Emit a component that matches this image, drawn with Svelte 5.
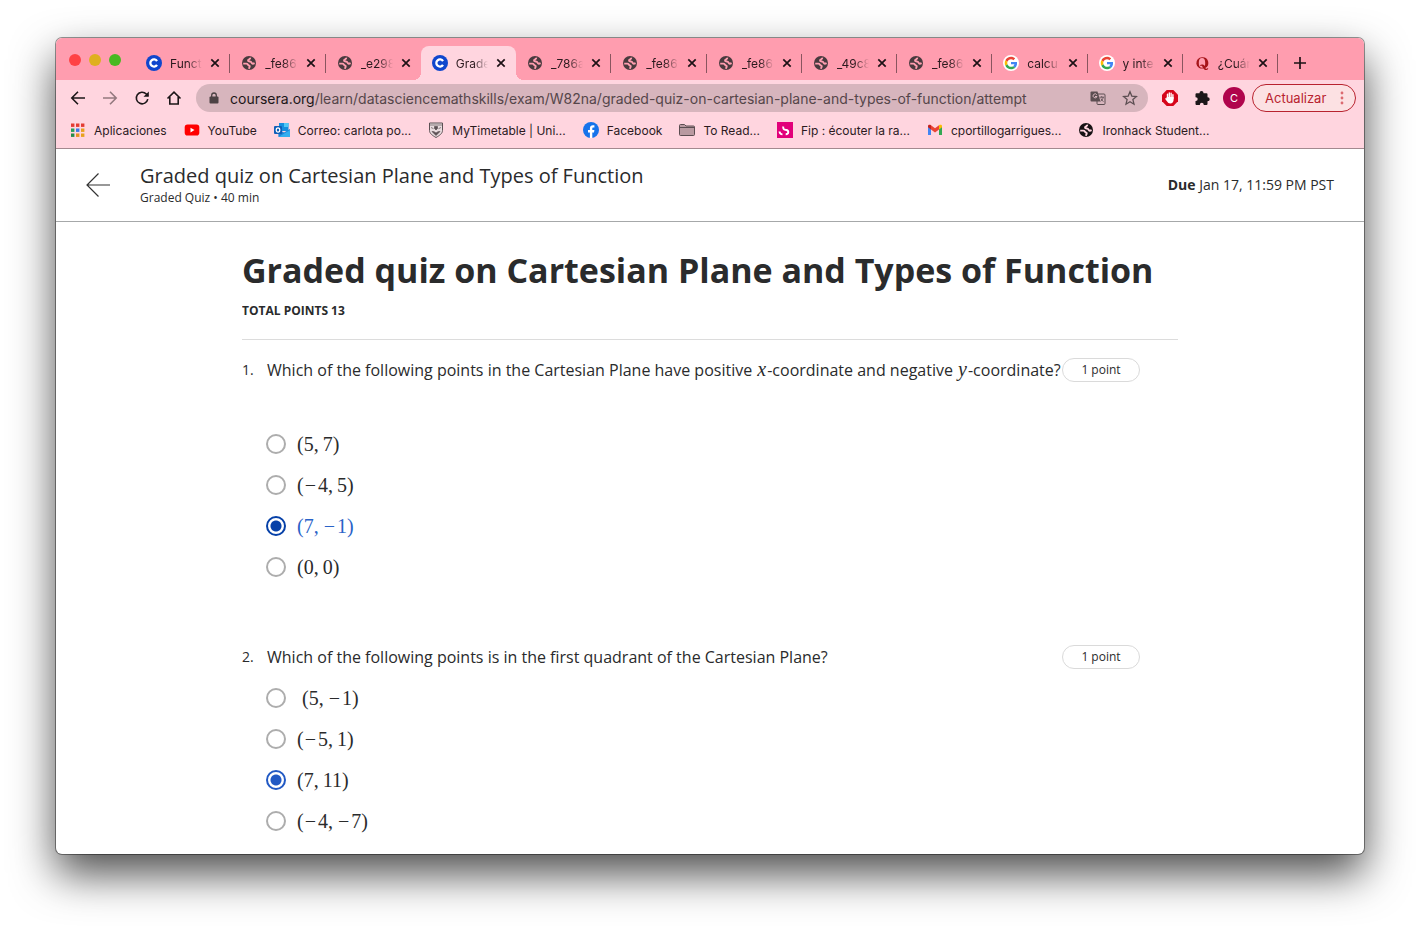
<script>
  const tabs = [
    { icon: 'coursera', title: 'Funct' },
    { icon: 'globe', title: '_fe86' },
    { icon: 'globe', title: '_e298' },
    { icon: 'coursera', title: 'Grade', active: true },
    { icon: 'globe', title: '_786a' },
    { icon: 'globe', title: '_fe86' },
    { icon: 'globe', title: '_fe86' },
    { icon: 'globe', title: '_49c8' },
    { icon: 'globe', title: '_fe86' },
    { icon: 'google', title: 'calcu' },
    { icon: 'google', title: 'y inte' },
    { icon: 'quora', title: '¿Cuán' }
  ];

  const bookmarks = [
    { icon: 'apps', title: 'Aplicaciones' },
    { icon: 'youtube', title: 'YouTube' },
    { icon: 'outlook', title: 'Correo: carlota po...' },
    { icon: 'shield', title: 'MyTimetable | Uni...' },
    { icon: 'facebook', title: 'Facebook' },
    { icon: 'folder', title: 'To Read...' },
    { icon: 'fip', title: 'Fip : écouter la ra...' },
    { icon: 'gmail', title: 'cportillogarrigues...' },
    { icon: 'globe', title: 'Ironhack Student...', dark: true }
  ];

  let questions = $state([
    {
      text: ['Which of the following points in the Cartesian Plane have positive ', 'x', '-coordinate and negative ', 'y', '-coordinate?'],
      options: ['(5,7)', '(−4,5)', '(7,−1)', '(0,0)'],
      answer: 2,
      spaced: true,
      focused: true
    },
    {
      text: ['Which of the following points is in the first quadrant of the Cartesian Plane?'],
      options: ['\u00a0(5,−1)', '(−5,1)', '(7,11)', '(−4,−7)'],
      answer: 2
    }
  ]);
</script>

{#snippet icon(name)}
  <svg class="icon" viewBox="0 0 16 16" aria-hidden="true">
    {#if name === 'coursera'}
      <circle cx="8" cy="8" r="8" fill="#0f46cd" />
      <path d="M11 6.1A3.6 3.6 0 1 0 11 9.9" fill="none" stroke="#fff" stroke-width="2.3" />
    {:else if name === 'globe'}
      <circle cx="8" cy="8" r="7" fill="currentColor" />
      <path d="M9.300 2.700C9.500 4.600 7.200 3.900 7 5.400c-.1 1.400 1.300 1 2.400 1.300 1.400.4 1 1.900 2.300 2 .8.1 1.400-.3 1.900-.6" fill="none" stroke="var(--land)" stroke-width="1.900" />
      <path d="M2.200 8.600h3.200c1.500 0 1.300 1.700 2.500 1.900 1.400.3.900 1.600-.2 3.300" fill="none" stroke="var(--land)" stroke-width="1.900" />
    {:else if name === 'google'}
      <circle cx="8" cy="8" r="8" fill="#fff" />
      <g transform="translate(1.700 1.700) scale(.2625)">
        <path fill="#EA4335" d="M24 9.500c3.540 0 6.710 1.220 9.210 3.600l6.850-6.850C35.900 2.380 30.470 0 24 0 14.620 0 6.510 5.380 2.560 13.220l7.980 6.190C12.430 13.720 17.740 9.500 24 9.500z" />
        <path fill="#4285F4" d="M46.980 24.550c0-1.570-.15-3.090-.38-4.550H24v9.020h12.940c-.58 2.960-2.260 5.480-4.780 7.180l7.730 6c4.510-4.180 7.090-10.360 7.090-17.650z" />
        <path fill="#FBBC05" d="M10.530 28.590c-.48-1.450-.76-2.990-.76-4.590s.27-3.140.76-4.590l-7.980-6.190C.92 16.460 0 20.120 0 24s.92 7.540 2.560 10.780l7.970-6.190z" />
        <path fill="#34A853" d="M24 48c6.480 0 11.930-2.130 15.890-5.810l-7.730-6c-2.150 1.450-4.920 2.300-8.160 2.300-6.260 0-11.570-4.220-13.470-9.910l-7.980 6.190C6.510 42.620 14.620 48 24 48z" />
      </g>
    {:else if name === 'quora'}
      <path fill="#a6151a" fill-rule="evenodd" d="M8 2.200a5.700 5.700 0 1 0 1.500 11.200c.7 1 1.500 1.500 2.700 1.500 1.500 0 2-.900 2-2h-.700c0 .5-.3.9-.9.9-.5 0-.9-.3-1.300-.900A5.700 5.700 0 0 0 8 2.200zm0 .8c2.300 0 3.200 1.700 3.200 4.900 0 1.300-.1 2.300-.5 3.100-.700-.9-1.600-1.400-2.700-1.400-.9 0-1.600.3-2 .7l.3.6c1.200-.4 2 .3 2.600 1.600-.3.100-.6.200-.9.200-2.300 0-3.200-1.700-3.200-4.800S5.700 3 8 3z" />
    {:else if name === 'apps'}
      {#each [0, 1, 2] as row}
        {#each [0, 1, 2] as col}
          <rect x={1 + col * 5} y={1.500 + row * 5} width="3.400" height="3.400" fill={['#e33b32', '#e33b32', '#e33b32', '#25a05a', '#3b78e7', '#e8a11d', '#258c4b', '#e8911d', '#e8a11d'][row * 3 + col]} />
        {/each}
      {/each}
    {:else if name === 'youtube'}
      <rect x=".7" y="2.600" width="14.600" height="11" rx="2.800" fill="#f00" />
      <path d="M6.500 5.800v4.600l4-2.300z" fill="#fff" />
    {:else if name === 'outlook'}
      <path d="M5 1h9.500v8H5z" fill="#1490df" />
      <path d="M10 1h4.500v4H10z" fill="#50c8f5" />
      <path d="M4 7l6 3.500L16 7v8H4.500z" fill="#1b84d8" />
      <path d="M4.500 15L16 8v7z" fill="#32aef0" />
      <rect x="0" y="4" width="8" height="8" rx="1" fill="#0f5fb8" />
      <ellipse cx="4" cy="8" rx="1.800" ry="2.100" fill="none" stroke="#fff" stroke-width="1.200" />
    {:else if name === 'shield'}
      <path d="M1.500 1h13v7.500c0 3-3 5-6.500 7-3.500-2-6.500-4-6.500-7z" fill="#e9dcdf" stroke="#5b5054" stroke-width="1" />
      <path d="M2 3h12M3 5.500l2.500 1.200M13 5.500l-2.500 1.200M6.500 4.500h3v2L8 8 6.500 6.500zM4 9.500l4 4 4-4-2 .2-2 1.300-2-1.300z" fill="#5b5054" stroke="#5b5054" stroke-width=".7" />
    {:else if name === 'facebook'}
      <circle cx="8" cy="8" r="8" fill="#1673ea" />
      <path d="M6.900 16v-5.500H5V8.100h1.900V6.400c0-2.100 1.200-3.200 3-3.200l1.500.1v2.100h-.9c-1 0-1.200.5-1.200 1.200v1.500h2.100l-.4 2.400H9.300V16z" fill="#fff" />
    {:else if name === 'folder'}
      <path d="M.5 3.500q0-1 1-1h4l1.500 1.500h7.500q1 0 1 1v7.500q0 1-1 1h-13q-1 0-1-1z" fill="#b99aa1" stroke="#5b4d51" />
      <path d="M.5 5.500h15" stroke="#5b4d51" />
    {:else if name === 'fip'}
      <rect width="16" height="16" fill="#e2007a" />
      <path d="M6.300 4.500c-.4 1.800.3 2.900 2 3.200 1.900.2 3 .8 3 2.300 0 1.400-1 2.200-2.600 2.200M2.500 9.500c.2 1.900 1.300 2.900 3 2.900" fill="none" stroke="#fff" stroke-width="1.900" />
    {:else if name === 'gmail'}
      <path d="M1 4v9h3V6.500z" fill="#4285f4" />
      <path d="M12 6.500V13h3V4z" fill="#34a853" />
      <path d="M4 3.200v4.300l4 3 4-3V3.200l-4 3z" fill="#ea4335" />
      <path d="M1 4v1.300l3 2.200V3.200C2.800 2.300 1 2.700 1 4z" fill="#c5221f" />
      <path d="M15 4v1.300l-3 2.200V3.200c1.200-.9 3-.5 3 .8z" fill="#fbbc04" />
    {/if}
  </svg>
{/snippet}

{#snippet point(text)}
  <span class="math">{#each text as ch}{#if ch === ','}<span class="comma">,</span>{:else if ch === '−'}<span class="minus">−</span>{:else}{ch}{/if}{/each}</span>
{/snippet}

<div class="desktop">
  <div class="window">
    <div class="tabstrip">
      <div class="lights"><i class="red"></i><i class="yellow"></i><i class="green"></i></div>
      <div class="tabs">
        {#each tabs as tab, i}
          <div class="tab" class:active={tab.active} class:divided={!tab.active && !tabs[i + 1]?.active}>
            {@render icon(tab.icon)}
            <span class="tab-title">{tab.title}</span>
            <button class="close" aria-label="Close tab">
              <svg viewBox="0 0 10 10"><path d="M1.300 1.300l7.400 7.400M8.700 1.300L1.300 8.700" /></svg>
            </button>
          </div>
        {/each}
      </div>
      <button class="new-tab" aria-label="New tab">
        <svg viewBox="0 0 12 12"><path d="M6 0v12M0 6h12" /></svg>
      </button>
    </div>

    <div class="toolbar">
      <button class="tool" aria-label="Back"><svg viewBox="0 0 16 16"><path d="M15 8H2M8 1.800L1.800 8 8 14.200" /></svg></button>
      <button class="tool dim" aria-label="Forward"><svg viewBox="0 0 16 16"><path d="M1 8h13M8 1.800L14.200 8 8 14.200" /></svg></button>
      <button class="tool" aria-label="Reload"><svg viewBox="0 0 16 16"><path d="M13.800 9.200A5.800 5.800 0 1 1 12.300 4L14 5.700" /><path d="M14.800 1.500v5.300H9.500z" fill="currentColor" stroke="none" /></svg></button>
      <button class="tool" aria-label="Home"><svg viewBox="0 0 16 16"><path d="M1.500 8.500L8 2.200l6.500 6.300M3.800 7v7h8.400V7" /></svg></button>
      <div class="address">
        <svg class="lock" viewBox="0 0 10 12" aria-hidden="true"><rect x=".5" y="4.500" width="9" height="7" rx="1" fill="#4d4245" /><path d="M2.700 5V3.300a2.300 2.300 0 0 1 4.600 0V5" fill="none" stroke="#4d4245" stroke-width="1.300" /></svg>
        <span class="url"><b>coursera.org</b>/learn/datasciencemathskills/exam/W82na/graded-quiz-on-cartesian-plane-and-types-of-function/attempt</span>
        <button class="tool soft" aria-label="Translate">
          <svg viewBox="0 0 16 16"><rect x="7" y="4" width="8" height="10.500" rx="1" stroke-width="1" /><path d="M1.500 1.500h6l3 10h-9q-1 0-1-1v-8q0-1 1-1z" fill="currentColor" stroke="none" /><path d="M6.800 4.800A2 2 0 1 0 7 6.500H5" stroke="#d7b5bd" stroke-width="1" /><path d="M9.500 7.200h4.500M11.700 6.200v1M13.200 7.200c-.3 2-1.500 3.300-2.500 4M11 8.500c.5 1.500 1.500 2.500 2.500 3" stroke-width=".9" /></svg>
        </button>
        <button class="tool soft" aria-label="Bookmark this page">
          <svg viewBox="0 0 16 16"><path d="M8 1.800l1.800 4.300 4.700.4-3.600 3.100 1.100 4.600L8 11.700l-4 2.500 1.100-4.600L1.500 6.500l4.700-.4z" stroke-width="1.300" /></svg>
        </button>
      </div>
      <button class="tool" aria-label="Ad blocker">
        <svg viewBox="0 0 16 16"><path d="M4.700 0h6.600L16 4.700v6.600L11.300 16H4.700L0 11.300V4.700z" fill="#d6061b" stroke="none" /><path d="M5.500 8.500V4.200M7.300 7.500V2.900M9.100 7.500V3.100M10.900 8.500V4.600" stroke="#fff" stroke-width="1.400" stroke-linecap="round" /><path d="M4.800 7h6.800v3c0 2-1.300 3.400-3.300 3.400-1.600 0-2.400-.7-3.200-1.900L3.200 9c-.3-.7.600-1.200 1.100-.6z" fill="#fff" stroke="none" /></svg>
      </button>
      <button class="tool" aria-label="Extensions">
        <svg viewBox="0 0 16 16"><path d="M1.500 4.200q0-1 1-1h3V3a2 2 0 0 1 4 0v.2h3q1 0 1 1v3h.2a2 2 0 0 1 0 4h-.2v2.800q0 1-1 1H9.700v-.4a1.900 1.900 0 0 0-3.800 0v.4H2.500q-1 0-1-1v-3h.3a1.900 1.900 0 0 0 0-3.800h-.3z" fill="#1d1719" stroke="none" /></svg>
      </button>
      <button class="tool" aria-label="Profile"><span class="avatar">C</span></button>
      <button class="update">Actualizar <svg viewBox="0 0 4 14" aria-hidden="true"><circle cx="2" cy="2" r="1.400" /><circle cx="2" cy="7" r="1.400" /><circle cx="2" cy="12" r="1.400" /></svg></button>
    </div>

    <nav class="bookmarks">
      {#each bookmarks as mark}
        <a href="#top" class:dark={mark.dark}>{@render icon(mark.icon)}<span>{mark.title}</span></a>
      {/each}
    </nav>

    <header>
      <button class="leave" aria-label="Back to course"><svg viewBox="0 0 24 24"><path d="M24 12H1M12.500 .5L1 12l11.500 11.500" /></svg></button>
      <div class="heading">
        <div class="name">Graded quiz on Cartesian Plane and Types of Function</div>
        <div class="meta">Graded Quiz • 40 min</div>
      </div>
      <div class="due"><b>Due</b> Jan 17, 11:59 PM PST</div>
    </header>

    <main>
      <div class="title">
        <h1>Graded quiz on Cartesian Plane and Types of Function</h1>
        <div class="total">TOTAL POINTS 13</div>
      </div>
      {#each questions as q, n}
        <section class:spaced={q.spaced} class:focused={q.focused}>
          <div class="prompt">
            <span class="number">{n + 1}.</span>
            <p id="question-{n}">{#each q.text as part, k}{#if k % 2}<i class="variable">{part}</i>{:else}{part}{/if}{/each}</p>
            <span class="points">1 point</span>
          </div>
          <div class="options" role="radiogroup" aria-labelledby="question-{n}">
            {#each q.options as option, k}
              <label>
                <input type="radio" name="question-{n}" value={k} bind:group={q.answer} />
                {@render point(option)}
              </label>
            {/each}
          </div>
        </section>
      {/each}
    </main>
  </div>
</div>

<style>
  :global(body) { background: #fff; }
  * { box-sizing: border-box; }
  button { border: 0; padding: 0; background: none; color: inherit; font: inherit; }
  svg { display: block; flex: none; }

  .desktop {
    display: flex;
    height: 100vh;
    padding: 38px 56px 74px;
    overflow: hidden;
    font-family: Inter, sans-serif;
  }
  .window {
    flex: 1;
    min-width: 0;
    display: flex;
    flex-direction: column;
    overflow: hidden;
    border-radius: 6px;
    background: #fff;
    box-shadow: 0 0 0 1px rgba(0, 0, 0, .4), 0 20px 44px rgba(0, 0, 0, .7);
  }

  .tabstrip {
    flex: none;
    display: flex;
    height: 42px;
    background: #ff9daf;
    color: #2b1a1e;
    --land: #ff9daf;
  }
  .lights { display: flex; gap: 8px; padding: 16px 14px 0 13px; }
  .lights i { width: 12px; height: 12px; border-radius: 50%; }
  .red { background: #ff4245; }
  .yellow { background: #dfb01f; }
  .green { background: #48b922; }
  .tabs {
    flex: 1;
    min-width: 0;
    display: grid;
    grid-template-columns: repeat(12, minmax(0, 1fr));
    padding-top: 8px;
  }
  .tab { position: relative; display: flex; align-items: center; gap: 8px; padding: 0 10px 0 11px; font-size: 12px; }
  .tab.divided::after {
    content: '';
    position: absolute;
    right: 0;
    top: 8px;
    width: 1px;
    height: 19px;
    background: #8a555f;
  }
  .tab.active { background: #ffd5df; border-radius: 8px 8px 0 0; }
  .tab.active::before, .tab.active::after {
    content: '';
    position: absolute;
    bottom: 0;
    width: 8px;
    height: 8px;
  }
  .tab.active::before { left: -8px; background: radial-gradient(circle at 0 0, transparent 8px, #ffd5df 8px); }
  .tab.active::after { right: -8px; background: radial-gradient(circle at 100% 0, transparent 8px, #ffd5df 8px); }
  .icon { width: 16px; height: 16px; color: #493a3e; }
  .tab-title {
    flex: 1;
    min-width: 0;
    white-space: nowrap;
    mask-image: linear-gradient(90deg, #000 55%, transparent);
  }
  .close svg { width: 10px; height: 10px; }
  .close path, .new-tab path { stroke: #1d1216; stroke-width: 1.700; fill: none; }
  .new-tab { width: 86px; padding: 8px 0 0 16px; }
  .new-tab svg { width: 12px; height: 12px; }

  .toolbar { flex: none; display: flex; align-items: center; height: 36px; padding: 0 8px 0 6px; background: #ffd5df; }
  .tool { flex: none; width: 32px; height: 28px; display: grid; place-items: center; color: #1d1719; }
  .tool svg { width: 16px; height: 16px; fill: none; stroke: currentColor; stroke-width: 1.600; }
  .tool.dim { color: #94797f; }
  .tool.soft { color: #5c4e52; }
  .address {
    flex: 1;
    min-width: 0;
    display: flex;
    align-items: center;
    height: 28px;
    margin: 0 6px;
    padding: 0 2px 0 13px;
    border-radius: 14px;
    background: #d7b5bd;
  }
  .lock { width: 10px; height: 12px; }
  .url { flex: 1; min-width: 0; margin-left: 11px; overflow: hidden; white-space: nowrap; font-size: 14px; color: #55464a; }
  .url b { font-weight: 400; color: #1d1719; }
  .avatar { width: 22px; height: 22px; border-radius: 50%; background: #b0044c; color: #fff; font-size: 11px; line-height: 22px; }
  .update {
    flex: none;
    display: flex;
    align-items: center;
    justify-content: space-between;
    width: 104px;
    height: 28px;
    margin-left: 2px;
    padding: 0 11px 0 12px;
    border: 1px solid #b8232f;
    border-radius: 14px;
    background: #fce1e3;
    color: #b8232f;
    font-size: 13px;
  }
  .update svg { width: 4px; height: 14px; fill: #dc6a70; }

  .bookmarks {
    flex: none;
    display: flex;
    gap: 17px;
    height: 33px;
    padding: 0 14px 4px;
    border-bottom: 1px solid #a3898f;
    background: #ffd5df;
    --land: #ffd5df;
  }
  .bookmarks a { display: flex; align-items: center; gap: 8px; color: #2b1a1e; font-size: 12px; text-decoration: none; white-space: nowrap; }
  .bookmarks .dark .icon { color: #171214; }

  header, main { font-family: 'Open Sans', sans-serif; color: #2a2b2c; }
  header { flex: none; display: flex; align-items: center; height: 73px; padding: 0 30px; border-bottom: 1px solid #a6a8a9; }
  .leave svg { width: 24px; height: 24px; fill: none; stroke: #333; stroke-width: 1.200; }
  .heading { flex: 1; margin-left: 30px; }
  .name { font-size: 20px; line-height: 26px; }
  .meta { font-size: 12px; line-height: 18px; }
  .due { font-size: 14px; line-height: 20px; }

  main { flex: 1; min-height: 0; width: 100%; max-width: 936px; margin: 0 auto; overflow: hidden; }
  .title { padding: 25px 0 18px; border-bottom: 1px solid #dcdcdc; }
  h1 { margin: 0; font-size: 34px; line-height: 46px; white-space: nowrap; }
  .total { margin-top: 8px; font-size: 12px; line-height: 20px; font-weight: 700; }
  section { padding: 18px 38px 0 0; margin-bottom: 40px; }
  .prompt { display: flex; align-items: center; }
  .number { flex: none; width: 25px; font-size: 14px; line-height: 20px; }
  p { flex: 1; margin: 0; font-size: 16px; line-height: 24px; white-space: nowrap; }
  .variable { margin: 0 1px; font-family: 'Liberation Serif', serif; font-size: 20px; line-height: 20px; }
  .points { flex: none; width: 78px; height: 24px; border: 1px solid #dadada; border-radius: 12px; font-size: 12px; line-height: 22px; text-align: center; }
  .options { padding: 8px 0 0 24px; }
  .spaced .options { padding-top: 41px; }
  label { display: flex; align-items: center; gap: 11px; height: 41px; }
  input {
    appearance: none;
    flex: none;
    width: 20px;
    height: 20px;
    margin: 0;
    border: 2px solid #adadad;
    border-radius: 50%;
  }
  input:checked { border-color: #2159c4; background: radial-gradient(circle, #2159c4 5px, transparent 6px); }
  .focused input:checked { border-color: #0640a8; background: radial-gradient(circle, #0640a8 5px, transparent 6px); }
  .focused input:checked + .math { color: #2a63c8; }
  .math { font-family: 'Liberation Serif', serif; font-size: 20px; line-height: 24px; }
  .comma { margin-right: 4px; }
  .minus { margin: 0 2px 0 1px; }
</style>
